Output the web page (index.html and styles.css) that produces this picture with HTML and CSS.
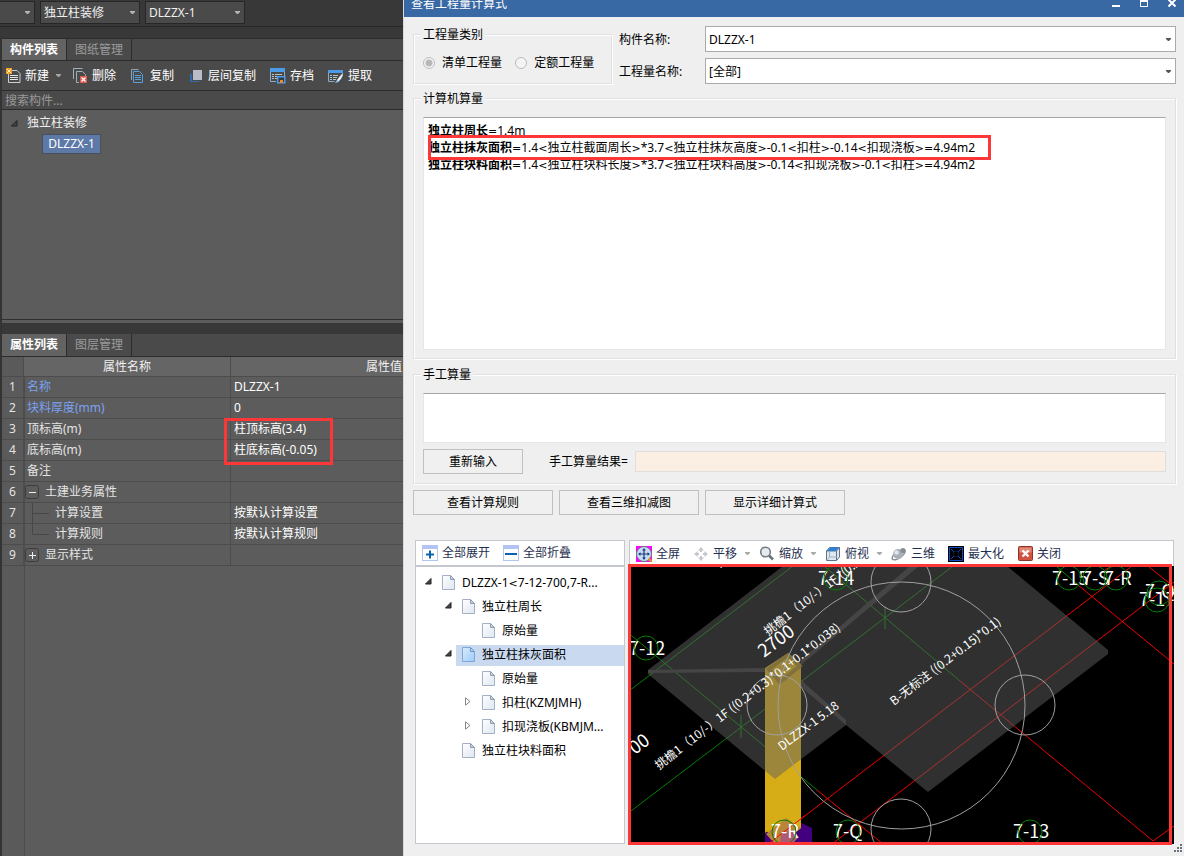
FILE: index.html
```html
<!DOCTYPE html>
<html lang="zh-CN">
<head>
<meta charset="utf-8">
<title>查看工程量计算式</title>
<link rel="stylesheet" href="styles.css">
</head>
<body>
<svg class="defs" aria-hidden="true">
  <defs>
    <linearGradient id="paper" x1="0" y1="0" x2="1" y2="1"><stop offset="0" stop-color="#fff"/><stop offset="1" stop-color="#dfe6f1"/></linearGradient>
    <linearGradient id="paper-on" x1="0" y1="0" x2="1" y2="1"><stop offset="0" stop-color="#d8ecff"/><stop offset="1" stop-color="#9ccbf8"/></linearGradient>
    <symbol id="doc" viewBox="0 0 13 16"><path d="M.5.5h8l4 4v10H.5z" fill="url(#paper)" stroke="#a3b0c4"/><path d="M8.500.500v4h4z" fill="#c9d3e2" stroke="#8e9cb3"/></symbol>
    <symbol id="doc-on" viewBox="0 0 13 16"><path d="M.5.5h8l4 4v10H.5z" fill="url(#paper-on)" stroke="#7ea6d6"/><path d="M8.500.500v4h4z" fill="#b5d6f7" stroke="#6c96c8"/></symbol>
    <symbol id="open" viewBox="0 0 7 7"><path d="M6 .5V6H.5z" fill="#444" stroke="#222"/></symbol>
    <symbol id="shut" viewBox="0 0 6 9"><path d="M.5.8 5 4.500.5 8.200z" fill="#fff" stroke="#888"/></symbol>
    <symbol id="down" viewBox="0 0 5 3"><path d="M0 0h5v1L3 3H2L0 1z" fill="currentColor"/></symbol>
  </defs>
</svg>
<div class="app">
  <div class="side">
    <div class="topbar">
      <button class="combo combo-cut" aria-label="楼层"><svg class="arrow"><use href="#down"/></svg></button>
      <button class="combo">独立柱装修<svg class="arrow"><use href="#down"/></svg></button>
      <button class="combo">DLZZX-1<svg class="arrow"><use href="#down"/></svg></button>
    </div>
    <section class="panel">
      <div class="tabs"><button class="tab tab-on">构件列表</button><button class="tab">图纸管理</button></div>
      <div class="tools">
        <button class="tool t-new"><svg width="16" height="16" viewBox="0 0 16 16"><path d="M5 2.500h6l3 3v9H2.500V6" fill="none" stroke="#c9d0d4"/><path d="M4 7.500h8M4 9.500h8M4 11.500h8" stroke="#e4e8ea"/><path d="M0 0h6v6H0z" fill="#f59a23"/><path d="M1 1h1v1h2V1h1v1H4v2h1v1H4V4H2v1H1V4h1V2H1z" fill="#fff3c4"/></svg>新建<svg class="arrow"><use href="#down"/></svg></button>
        <button class="tool t-del"><svg width="16" height="16" viewBox="0 0 16 16"><path d="M.5 11V.5h9M3.500 14.500v-11h6l3 3V8M3.500 14.500H6" fill="none" stroke="#9fb0b8"/><path d="M7 8h7v7H7z" fill="#e2574c"/><path d="m8.500 9.500 4 4m0-4-4 4" stroke="#fff" stroke-width="1.300"/></svg>删除</button>
        <button class="tool t-copy"><svg width="15" height="16" viewBox="0 0 15 16"><path d="M.5 12V1.500h7" fill="none" stroke="#8fa3b3"/><path d="M2.500 3.500h6l3 3v8h-9z" fill="none" stroke="#56a0e0"/><path d="M4 7.500h6M4 9.500h6M4 11.500h6" stroke="#56a0e0"/></svg>复制</button>
        <button class="tool t-floor"><svg width="14" height="14" viewBox="0 0 14 14"><path d="M1 5h2v7h7v1H1z" fill="#2f6da8"/><path d="M4 1h9v10H4z" fill="#b9bdca"/></svg>层间复制</button>
        <button class="tool t-save"><svg width="17" height="16" viewBox="0 0 17 16"><path d="M1 0h15v4H1z" fill="#4c9be8"/><path d="M1.500 4v9.500H7M15.500 4v4" fill="none" stroke="#8aaccf"/><path d="M3 6.500h2m1 0h7M3 8.500h2m1 0h2M3 10.500h2m1 0h2" stroke="#b9c3cc"/><path d="M8.800 8.800h7v6h-7z" fill="#353a40" stroke="#4c9be8" stroke-width="1.500"/><path d="M11 12h3v3h-3z" fill="#f08a2c"/></svg>存档</button>
        <button class="tool t-get"><svg width="17" height="16" viewBox="0 0 17 16"><path d="M1 2h15v3H1z" fill="#4c9be8"/><path d="M1.500 5v8.500h6M15.500 5v2" fill="none" stroke="#8aaccf"/><path d="M3 7.500h2m1 0h5M3 9.500h2m1 0h4M3 11.500h2m1 0h3" stroke="#b9c3cc"/><path d="m10 12 3-4 2-2 1 1-2 4-3 3z" fill="#e8edf0"/><path d="m8 15 2-3 2 2z" fill="#7fbdf2"/></svg>提取</button>
      </div>
      <input class="search" type="text" placeholder="搜索构件..." aria-label="搜索构件">
      <div class="parts">
        <div class="part-head"><svg width="7" height="7"><use href="#open"/></svg>独立柱装修</div>
        <button class="part-on">DLZZX-1</button>
      </div>
    </section>
    <section class="panel panel-props">
      <div class="tabs"><button class="tab tab-on">属性列表</button><button class="tab">图层管理</button></div>
      <div class="props">
        <table class="grid">
          <colgroup><col class="c-num"><col class="c-name"><col class="c-val"></colgroup>
          <thead><tr><th class="num"></th><th>属性名称</th><th>属性值</th></tr></thead>
          <tbody>
            <tr><td class="num">1</td><td class="link">名称</td><td>DLZZX-1</td></tr>
            <tr><td class="num">2</td><td class="link">块料厚度(mm)</td><td>0</td></tr>
            <tr><td class="num">3</td><td>顶标高(m)</td><td class="mark-host">柱顶标高(3.4)<span class="mark mark-props"></span></td></tr>
            <tr><td class="num">4</td><td>底标高(m)</td><td>柱底标高(-0.05)</td></tr>
            <tr><td class="num">5</td><td>备注</td><td></td></tr>
            <tr><td class="num">6</td><td class="nest"><span class="fold"><svg width="14" height="14" viewBox="0 0 14 14"><rect x=".5" y=".5" width="13" height="13" rx="2" fill="none" stroke="#3c3c3c"/><path d="M4 7.500h7" stroke="#eee"/></svg>土建业务属性</span></td><td></td></tr>
            <tr><td class="num">7</td><td class="nest"><span class="fold"><svg width="24" height="20" viewBox="0 0 24 20"><path d="M7.500 0v20M8 10.500h16" fill="none" stroke="#474747"/></svg>计算设置</span></td><td>按默认计算设置</td></tr>
            <tr><td class="num">8</td><td class="nest"><span class="fold"><svg width="24" height="20" viewBox="0 0 24 20"><path d="M7.500 0v10.500H24" fill="none" stroke="#474747"/></svg>计算规则</span></td><td>按默认计算规则</td></tr>
            <tr><td class="num">9</td><td class="nest"><span class="fold"><svg width="14" height="14" viewBox="0 0 14 14"><rect x=".5" y=".5" width="13" height="13" rx="2" fill="none" stroke="#3c3c3c"/><path d="M4 7.500h7M7.500 4v7" stroke="#eee"/></svg>显示样式</span></td><td></td></tr>
          </tbody>
        </table>
      </div>
    </section>
  </div>

  <main class="dialog">
    <header class="titlebar">
      <h1 class="title">查看工程量计算式</h1>
      <div class="winbtns">
        <button aria-label="最小化"><svg width="9" height="10" viewBox="0 0 9 10"><path d="M0 7h8v2H0z" fill="#fff"/></svg></button>
        <button aria-label="最大化窗口"><svg width="9" height="10" viewBox="0 0 9 10"><path d="M.5 1v7.500h7V1z" fill="none" stroke="#fff"/><path d="M0 0h8v4H0z" fill="#fff"/></svg></button>
        <button aria-label="关闭窗口"><svg width="9" height="10" viewBox="0 0 9 10"><path d="m.5 1.500 7 7m0-7-7 7" stroke="#fff" stroke-width="2"/></svg></button>
      </div>
    </header>
    <div class="content">
      <div class="filters">
        <fieldset class="group kind">
          <legend>工程量类别</legend>
          <label><input type="radio" name="kind" checked disabled>清单工程量</label>
          <label><input type="radio" name="kind" disabled>定额工程量</label>
        </fieldset>
        <div class="fields">
          <label for="part">构件名称:</label>
          <span class="selectbox"><select id="part"><option>DLZZX-1</option></select><svg class="arrow"><use href="#down"/></svg></span>
          <label for="qty">工程量名称:</label>
          <span class="selectbox"><select id="qty"><option>[全部]</option></select><svg class="arrow"><use href="#down"/></svg></span>
        </div>
      </div>
      <fieldset class="group auto">
        <legend>计算机算量</legend>
        <div class="well formulas">
          <p><b>独立柱周长</b><i class="op">=</i>1.4m</p>
          <p><b>独立柱抹灰面积</b><i class="op">=</i>1.4<i class="op">&lt;</i>独立柱截面周长<i class="op">&gt;</i>*3.7<i class="op">&lt;</i>独立柱抹灰高度<i class="op">&gt;</i>-0.1<i class="op">&lt;</i>扣柱<i class="op">&gt;</i>-0.14<i class="op">&lt;</i>扣现浇板<i class="op">&gt;=</i>4.94m2</p>
          <p><b>独立柱块料面积</b><i class="op">=</i>1.4<i class="op">&lt;</i>独立柱块料长度<i class="op">&gt;</i>*3.7<i class="op">&lt;</i>独立柱块料高度<i class="op">&gt;</i>-0.14<i class="op">&lt;</i>扣现浇板<i class="op">&gt;</i>-0.1<i class="op">&lt;</i>扣柱<i class="op">&gt;=</i>4.94m2</p>
          <span class="mark mark-formula"></span>
        </div>
      </fieldset>
      <fieldset class="group manual">
        <legend>手工算量</legend>
        <textarea class="well entry" aria-label="手工算量"></textarea>
        <div class="result">
          <button class="btn btn-redo">重新输入</button>
          <label for="res">手工算量结果=</label>
          <input id="res" type="text" readonly>
        </div>
      </fieldset>
      <div class="actions">
        <button class="btn">查看计算规则</button>
        <button class="btn">查看三维扣减图</button>
        <button class="btn">显示详细计算式</button>
      </div>
      <div class="lower">
        <section class="outline">
          <div class="bar bar-tree">
            <button><svg width="16" height="16" viewBox="0 0 16 16"><rect x=".5" y=".5" width="15" height="15" fill="#fff" stroke="#b3c3f4"/><path d="M1 1h14v3H1z" fill="#b3c3f4"/><path d="M4 9.500h8M8 5.500v8" stroke="#0a62ae" stroke-width="2"/></svg>全部展开</button>
            <button><svg width="16" height="16" viewBox="0 0 16 16"><rect x=".5" y=".5" width="15" height="15" fill="#fff" stroke="#b3c3f4"/><path d="M1 1h14v3H1z" fill="#b3c3f4"/><path d="M2 9h12" stroke="#0a62ae" stroke-width="2"/></svg>全部折叠</button>
          </div>
          <ul class="tree">
            <li class="l1"><svg class="tw"><use href="#open"/></svg><span><svg class="doc"><use href="#doc"/></svg><em>DLZZX-1<i class="op">&lt;</i>7-12-700,7-R...</em></span></li>
            <li class="l2"><svg class="tw"><use href="#open"/></svg><span><svg class="doc"><use href="#doc"/></svg>独立柱周长</span></li>
            <li class="l3"><i class="tw"></i><span><svg class="doc"><use href="#doc"/></svg>原始量</span></li>
            <li class="l2"><svg class="tw"><use href="#open"/></svg><span class="on"><svg class="doc"><use href="#doc-on"/></svg>独立柱抹灰面积</span></li>
            <li class="l3"><i class="tw"></i><span><svg class="doc"><use href="#doc"/></svg>原始量</span></li>
            <li class="l3"><svg class="tw tw-shut"><use href="#shut"/></svg><span><svg class="doc"><use href="#doc"/></svg>扣柱(KZMJMH)</span></li>
            <li class="l3"><svg class="tw tw-shut"><use href="#shut"/></svg><span><svg class="doc"><use href="#doc"/></svg>扣现浇板(KBMJM...</span></li>
            <li class="l2"><i class="tw"></i><span><svg class="doc"><use href="#doc"/></svg>独立柱块料面积</span></li>
          </ul>
        </section>
        <section class="viewer">
          <div class="bar bar-view">
            <button><svg width="16" height="16" viewBox="0 0 16 16"><path d="M0 0h16v16H0z" fill="#f0f"/><circle cx="8" cy="8" r="7.500" fill="#c6dcf4" stroke="#6a7686"/><path d="M8 3v10M3 8h10" stroke="#1c3a7a" stroke-width="1.200"/><path d="m8 2 1.800 2.500H6.200zm0 12 1.800-2.500H6.200zM2 8l2.500-1.800v3.600zm12 0-2.500-1.800v3.600z" fill="#1c3a7a"/><path d="m12.500 12.500 3 3" stroke="#d8922c" stroke-width="2.500"/></svg>全屏</button>
            <button class="split"><svg width="16" height="16" viewBox="0 0 16 16"><path d="m8 1 3 3.500H9V6H7V4.500H5zM8 15l3-3.500H9V10H7v1.500H5zM1 8l3.500-3v2H6v2H4.500v2zM15 8l-3.500-3v2H10v2h1.500v2z" fill="#c3c6cb"/></svg>平移<svg class="arrow"><use href="#down"/></svg></button>
            <button class="split"><svg width="16" height="16" viewBox="0 0 16 16"><circle cx="6.500" cy="6" r="4.800" fill="#e6ebf0" stroke="#757c86" stroke-width="1.600"/><path d="m10 9.500 4 4" stroke="#6d737c" stroke-width="2.600"/></svg>缩放<svg class="arrow"><use href="#down"/></svg></button>
            <button class="split"><svg width="16" height="16" viewBox="0 0 16 16"><path d="m1.500 5 3-3.500h10V11l-3 3.500h-10zM1.500 5h10v9.500M11.500 5l3-3.500" fill="#dfe8f1" stroke="#5f7488"/><path d="m2 5 3-3.500h9L11 5z" fill="#2e7fd6"/><path d="M4.500 5.500V11h7m-7 0-3 3.500" fill="none" stroke="#9fb0c0"/></svg>俯视<svg class="arrow"><use href="#down"/></svg></button>
            <button><svg width="16" height="16" viewBox="0 0 16 16"><ellipse cx="7.500" cy="8.500" rx="7.500" ry="3.200" transform="rotate(-35 8 8.500)" fill="none" stroke="#8b929c" stroke-width="1.500"/><circle cx="7" cy="8" r="5" fill="#aab0b8"/><circle cx="5.500" cy="6.500" r="2.200" fill="#e2e5e9"/><circle cx="12" cy="4.500" r="2.600" fill="#868c96"/></svg>三维</button>
            <button><svg width="16" height="16" viewBox="0 0 16 16"><path d="M0 0h16v16H0z" fill="#000"/><path d="M1.500 1.500h13v13h-13z" fill="none" stroke="#0a4ccc"/><path d="m3 3 3 3m4 4 3 3M13 3l-3 3m-4 4-3 3" stroke="#0a4ccc"/><path d="M5.500 5.500h5v5h-5z" fill="none" stroke="#0a2c80" stroke-dasharray="1 1"/></svg>最大化</button>
            <button><svg width="16" height="16" viewBox="0 0 16 16"><rect x="1.500" y=".5" width="14" height="14" rx="1" fill="#d1533f" stroke="#8e3426"/><path d="M2.500 1.500h12v5h-12z" fill="#e08a78"/><path d="m5.500 4.500 6 6m0-6-6 6" stroke="#fff" stroke-width="2.400"/></svg>关闭</button>
          </div>
          <div class="stage">
            <svg class="scene" viewBox="629 566 545 278" preserveAspectRatio="xMinYMin slice" role="img" aria-label="三维视图">
              <g class="green">
                <path d="M629 691 793 566M629 812.500 953 566M629 633.500l188 156.500M824 566l136 115M1056 566l22 19"/>
                <path d="M741 715v23M885 606v23"/>
              </g>
              <g class="red">
                <path d="m817 790 66 54M960 681l193 160 21-15M1078 585l96 79M768 844l364-278M832 844l342-262M1148 566l26 21M1104 571l7-5"/>
              </g>
              <path d="M765 668 788 653 801 664V832L784 844H765z" fill="#d6ad17"/>
              <path d="M765 833l22-17 25 12v16h-47z" fill="#42007e"/>
              <path d="M765 764h36v64l-19 16-17-14z" fill="#d6ad17"/>
              <path d="m766 834 20-16 15 10-21 16h-5z" fill="#b98538"/>
              <path d="m780 844 1-9 10-6 8 8-7 7z" fill="#ad5a73"/>
              <path class="slab" d="M783 566 648 670v4l127 105 71-54 82 67 180-138v-4L1007 566z"/>
              <g class="band"><path d="M648 670l117-2v4l-117 1zM801 660l109-94h9L801 665zM801 680l45 40v5l-45-38z"/></g>
              <path d="m769 669 19-14 12 11-20 16z" fill="none" stroke="#77683a" class="cap"/>
              <path d="M768 844 806 815" class="redline"/>
              <g class="rings"><circle cx="901.500" cy="705.500" r="123.500"/><circle cx="777" cy="705" r="30"/><circle cx="901" cy="582" r="30"/><circle cx="901" cy="829" r="30"/><circle cx="1025" cy="705" r="30"/></g>
              <g class="axis">
                <text x="629" y="655">7-12</text><text x="818" y="585">7-14</text><text x="1052" y="585">7-15</text><text x="1082" y="585">7-S</text><text x="1104" y="585">7-R</text><text x="1145" y="598">7-Q</text><text x="1139" y="606">7-17</text><text x="1013" y="838">7-13</text><text x="771" y="838">7-R</text><text x="833" y="838">7-Q</text>
                <text transform="translate(764 658) rotate(-37)">2700</text><text transform="translate(619 767) rotate(-37)">2700</text>
              </g>
              <g class="green bubble"><circle cx="646" cy="648" r="12"/><circle cx="836" cy="578" r="12"/><circle cx="1069" cy="578" r="12"/><circle cx="1095" cy="578" r="12"/><circle cx="1116" cy="578" r="12"/><circle cx="1159" cy="593" r="12"/><circle cx="1157" cy="600" r="12"/><circle cx="1030" cy="832" r="12"/><circle cx="784" cy="832" r="12"/><circle cx="848" cy="832" r="12"/></g>
              <g class="note">
                <text transform="translate(659 770) rotate(-37.700)">挑檐1（10/-）1F ((0.2+0.3)*0.1+0.1*0.038)</text>
                <text transform="translate(768 636) rotate(-37.700)">挑檐1（10/-）1F ((0.2+0.3)*0.1)</text>
                <text transform="translate(782 751) rotate(-37)">DLZZX-1 5.18</text>
                <text transform="translate(894 706) rotate(-37.500)">B-无标注 ((0.2+0.15)*0.1)</text>
              </g>
              <path d="M719 566h5l-3 2z" fill="#fff"/>
            </svg>
            <span class="mark mark-stage"></span>
          </div>
        </section>
      </div>
    </div>
    <svg class="grip" width="9" height="9" viewBox="0 0 9 9"><path d="M6 0h2v2H6zM3 3h2v2H3zM6 3h2v2H6zM0 6h2v2H0zM3 6h2v2H3zM6 6h2v2H6z" fill="#6d7480"/></svg>
  </main>
</div>
</body>
</html>
```
FILE: styles.css
```css
* { box-sizing: border-box; }
body {
  margin: 0;
  font: 12px/16px "Noto Sans", "Noto Sans CJK SC", sans-serif;
  color: #000;
}
button, input, select, textarea { font: inherit; color: inherit; }
button { padding: 0; border: 0; background: none; white-space: nowrap; }
.defs { position: absolute; width: 0; height: 0; }
.arrow { width: 5px; height: 3px; flex: none; }
.op { font: 11px/16px "DejaVu Sans", sans-serif; }
.app {
  display: grid;
  grid-template-columns: 404px minmax(0, 1fr);
  min-height: 100vh;
}

/* dark side */
.side {
  display: flex;
  flex-direction: column;
  min-width: 0;
  overflow: hidden;
  background: #383838;
  color: #f0f0f0;
  border-right: 1px solid #d5dae0;
}
.topbar {
  display: flex;
  gap: 5px;
  height: 27px;
  padding: 1px 0 2px;
  border-bottom: 1px solid #262626;
}
.combo {
  display: flex;
  align-items: center;
  justify-content: space-between;
  width: 100px;
  padding: 0 4px 0 3px;
  border: 1px solid #262626;
  background: #4a4a4a;
}
.combo .arrow { color: #b5b5b5; }
.combo-cut { width: 35px; justify-content: flex-end; border-left: 0; }
.panel {
  display: flex;
  flex-direction: column;
  margin-top: 11px;
  border-left: 2px solid #343434;
}
.tabs {
  display: flex;
  height: 23px;
  background: #4a4a4a;
  border-top: 1px solid #2c2c2c;
  border-bottom: 1px solid #2c2c2c;
}
.tab {
  width: 65px;
  border-right: 1px solid #2c2c2c;
  color: #9c9c9c;
}
.tab-on { width: 64px; background: #636363; color: #fff; font-weight: bold; border: 0; }
.tab-on + .tab { border-left: 1px solid #2c2c2c; width: 66px; }
.tools {
  display: flex;
  align-items: center;
  height: 30px;
  padding-left: 4px;
  background: #4a4a4a;
  border-bottom: 1px solid #2c2c2c;
}
.tool { display: flex; align-items: center; gap: 4px; color: #fff; }
.tool .arrow { margin-left: 4px; color: #a5a5a5; }
.t-new { gap: 3px; }
.t-del { gap: 3px; margin-left: 12px; }
.t-copy { margin-left: 15px; }
.t-floor { gap: 5px; margin-left: 15px; }
.t-save, .t-get { margin-left: 13px; }
.search {
  height: 19px;
  padding: 0 3px;
  border: 0;
  border-bottom: 1px solid #2c2c2c;
  border-radius: 0;
  background: #4a4a4a;
}
.search::placeholder { color: #999; opacity: 1; }
.parts { height: 210px; padding: 5px 0 0 9px; background: #5c5c5c; border-bottom: 1px solid #2f2f2f; }
.part-head { display: flex; align-items: center; gap: 9px; }
.part-on {
  margin: 3px 0 0 31px;
  width: 59px;
  height: 20px;
  border: 1px solid #4a4f5a;
  background: #5d79a8;
  color: #fff;
}
.panel-props { flex: 1; margin-top: 0; }
.panel-props::before {
  content: "";
  height: 14px;
  border-top: 3px solid #5c5c5c;
}
.panel-props .tabs { height: 23px; border-top: 0; }
.panel-props { min-height: 0; }
.panel-props .tabs { height: 23px; margin-top: -3px; }
.props {
  flex: 1;
  overflow: hidden;
  background: linear-gradient(90deg, #5a5a5a 22px, #4c4c4c 22px, #4c4c4c 23px, #5c5c5c 23px);
}
.grid { width: 536px; table-layout: fixed; border-collapse: separate; border-spacing: 0; }
.c-num { width: 22px; }
.c-name { width: 207px; }
.grid th { height: 20px; padding: 0; font-weight: normal; background: #656565; border-right: 1px solid #4c4c4c; border-bottom: 1px solid #4c4c4c; }
.grid td { height: 21px; padding: 0 3px; color: #e4e4e4; border-right: 1px solid #4c4c4c; border-bottom: 1px solid #4c4c4c; }
.grid td:last-child { color: #fff; }
.grid .num { padding: 0; text-align: center; background: #5a5a5a; }
.grid td.link { color: #7aa2f0; }
.grid td.nest { padding-left: 1px; }
.fold { display: flex; align-items: center; gap: 6px; height: 20px; }
.mark-host { position: relative; }
.mark { position: absolute; border: 3px solid #fd3737; pointer-events: none; }
.mark-props { left: -7px; top: -1px; width: 109px; height: 47px; }

/* dialog */
.dialog { position: relative; display: flex; flex-direction: column; min-width: 0; background: #efefef; }
.titlebar {
  display: flex;
  justify-content: space-between;
  align-items: flex-start;
  height: 17px;
  padding: 0 7px;
  overflow: hidden;
  background: #3869a4;
  color: #fff;
}
.title { margin: 0; font-size: 12px; font-weight: normal; line-height: 8px; }
.winbtns { display: flex; gap: 19px; margin-top: -2px; }
.winbtns svg { display: block; }
.content { display: flex; flex: 1; flex-direction: column; padding: 9px 8px 12px 9px; }
.group {
  min-width: 0;
  margin: 0;
  padding: 0 9px;
  border: 1px solid #e0e0e0;
  box-shadow: inset 1px 1px 0 #fff, 1px 1px 0 #fff;
}
.group legend { height: 16px; margin-left: -2px; padding: 0 2px; line-height: 18px; background: #efefef; }
.filters { display: flex; gap: 7px; }
.kind { width: 199px; height: 58px; white-space: nowrap; }
.kind label { display: inline-flex; align-items: center; gap: 7px; margin: 13px 10px 0 0; }
.kind label + label { margin-right: 0; }
.kind input {
  appearance: none;
  width: 12px;
  height: 12px;
  margin: 0;
  border: 1px solid #bcbcbc;
  border-radius: 50%;
  background: #f4f4f4;
}
.kind input:checked { background: radial-gradient(#b8b8b8 3px, #f4f4f4 4px); }
.fields {
  flex: 1;
  display: grid;
  grid-template-columns: 80px minmax(0, 1fr);
  gap: 6px;
  align-items: center;
  align-content: start;
}
.fields label { padding-top: 2px; }
.selectbox { position: relative; display: block; }
.selectbox .arrow { position: absolute; right: 5px; top: 12px; color: #555; }
.selectbox select {
  appearance: none;
  display: block;
  width: 100%;
  height: 26px;
  padding: 1px 3px 0;
  border: 1px solid #ababab;
  border-radius: 0;
  background: #fff;
}
.auto { margin-top: 6px; padding-bottom: 8px; }
.well { display: block; width: 100%; border: 1px solid #e3e6ea; border-top-color: #a6a6a6; background: #fff; }
.formulas { position: relative; height: 233px; margin-top: 11px; padding: 4px; white-space: nowrap; }
.formulas p { height: 17px; margin: 0; line-height: 17px; }
.mark-formula { left: 4px; top: 17px; width: 563px; height: 25px; }
.manual { margin-top: 7px; padding-bottom: 9px; }
.entry { height: 50px; margin-top: 11px; resize: none; border-radius: 0; }
.result { display: flex; align-items: center; margin-top: 6px; }
.result label { margin: 0 7px 0 26px; white-space: nowrap; }
.result input { flex: 1; min-width: 0; height: 21px; border: 1px solid #dedede; background: #fbefe4; }
.btn { width: 140px; height: 25px; border: 1px solid #c0c0c0; background: #f0f0f0; }
.btn-redo { width: 100px; }
.actions { display: flex; gap: 6px; margin-top: 6px; }
.lower { display: flex; flex: 1; gap: 4px; margin: 25px 2px 0; }
.outline { display: flex; flex-direction: column; width: 210px; }
.viewer { display: flex; flex: 1; flex-direction: column; min-width: 0; }
.bar { display: flex; align-items: center; height: 26px; padding: 0 6px; border: 1px solid #c5c7cf; background: #fff; color: #1f2f50; }
.bar button { display: flex; align-items: center; gap: 4px; }
.bar-tree { gap: 13px; }
.bar-view { gap: 13px; border-bottom: 0; }
.bar .split { margin-right: -4px; }
.split .arrow { margin-left: 4px; color: #aaa; }
.tree { flex: 1; margin: 0; padding: 4px 0 0; list-style: none; border: 1px solid #c5c7cf; background: #fff; white-space: nowrap; overflow: hidden; }
.tree li { display: flex; height: 24px; align-items: center; }
.tree li > span { display: flex; flex: 1; gap: 7px; align-items: center; height: 21px; padding-left: 6px; }
.tree li > .on { background: #c9daf0; }
.tree em { font-style: normal; }
.tw { width: 7px; height: 7px; margin: -4px 4px 0 0; }
.tw-shut { width: 6px; height: 9px; margin-right: 5px; }
.doc { width: 13px; height: 16px; flex: none; }
.l1 { padding-left: 9px; }
.l2 { padding-left: 29px; }
.l3 { padding-left: 49px; }
.stage { position: relative; flex: 1; min-height: 278px; background: #000; }
.scene { position: absolute; inset: 0; width: 100%; height: 100%; }
.scene path, .scene circle { stroke-width: 1; }
.scene .cap { stroke-width: 4; opacity: .7; }
.green { fill: none; stroke: #008000; }
.red, .redline { fill: none; stroke: #f00000; }
.slab { fill: #606060; opacity: .5; }
.band { fill: #454545; }
.rings { fill: none; stroke: #a0a0a0; }
.axis, .note { fill: #fff; font-family: "Noto Sans CJK SC", sans-serif; }
.axis { font-size: 18px; }
.note { font-size: 12px; }
.mark-stage { inset: -2px 2px -1px -1px; }
.grip { position: absolute; right: 1px; bottom: 3px; }
```
